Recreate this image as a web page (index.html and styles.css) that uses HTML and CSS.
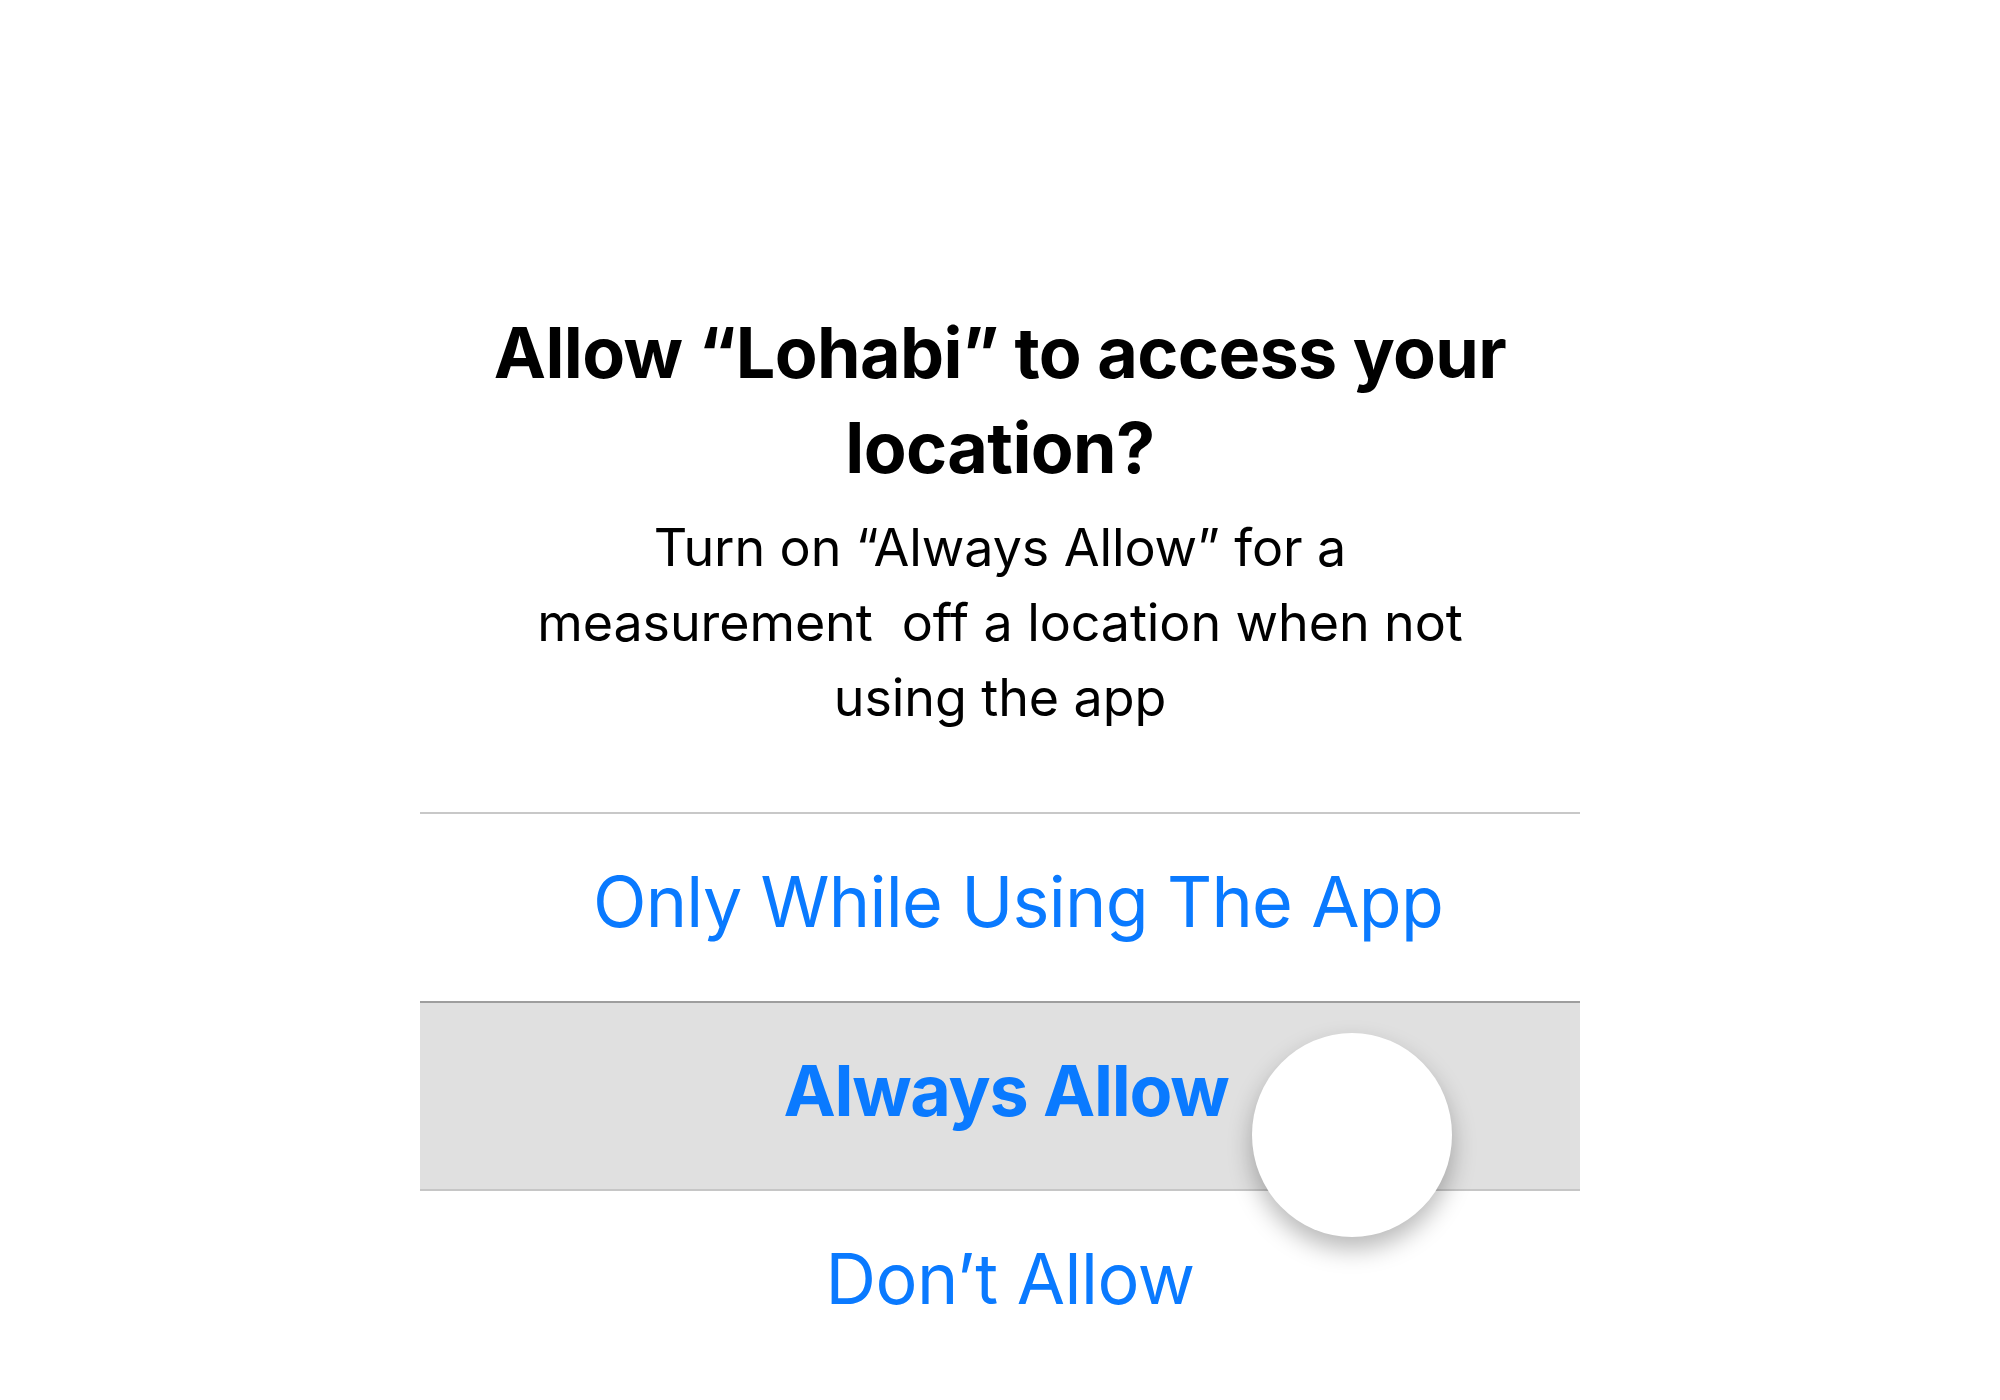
FILE: index.html
```html
<!DOCTYPE html>
<html>
<head>
<meta charset="utf-8">
<link rel="stylesheet" href="styles.css">
</head>
<body>
<div class="alert">
  <div class="header">
    <h1 class="title">Allow “Lohabi” to access your<br>location?</h1>
    <p class="message">Turn on “Always Allow” for a<br>measurement&nbsp; off a location when not<br>using the app</p>
  </div>
  <div class="actions">
    <div class="action action-first">Only While Using The App</div>
    <div class="action action-pressed">
      <span>Always Allow</span>
      <div class="touch"></div>
    </div>
    <div class="action action-last">Don’t Allow</div>
  </div>
</div>
</body>
</html>
```

FILE: styles.css
```css
html, body {
  margin: 0;
  padding: 0;
  background: #ffffff;
}
body {
  width: 2000px;
  height: 1400px;
  overflow: hidden;
  font-family: "Inter", "Liberation Sans", sans-serif;
}
.alert {
  width: 1160px;
  margin: 0 0 0 420px;
  padding-top: 305px;
}
.header {
  text-align: center;
  padding-bottom: 77px;
}
.title {
  margin: 0;
  font-size: 70px;
  line-height: 95px;
  font-weight: 700;
  color: #000;
  letter-spacing: -0.6px;
}
.message {
  margin: 15px 0 0 0;
  font-size: 52px;
  line-height: 75px;
  font-weight: 400;
  color: #000;
  letter-spacing: -0.1px;
}
.actions {
  display: flex;
  flex-direction: column;
}
.action {
  position: relative;
  text-align: center;
  font-size: 70px;
  line-height: 95px;
  color: #0a7aff;
  padding: 40px 0 51px 0;
  border-top: 2px solid #c8c8c8;
}
.action-first {
  padding-left: 36px;
  padding-bottom: 52px;
  letter-spacing: -0.7px;
}
.action-pressed {
  background: #e0e0e0;
  font-weight: 700;
  border-top-color: #9e9e9e;
  padding-left: 12px;
  letter-spacing: -1.2px;
}
.action-last {
  border-top-color: #c6c6c6;
  padding-left: 20px;
  letter-spacing: -0.5px;
}
.touch {
  position: absolute;
  left: 832px;
  top: 30px;
  width: 200px;
  height: 204px;
  border-radius: 50%;
  background: #ffffff;
  box-shadow: 0 12px 24px rgba(0, 0, 0, 0.28);
  z-index: 2;
}
```
